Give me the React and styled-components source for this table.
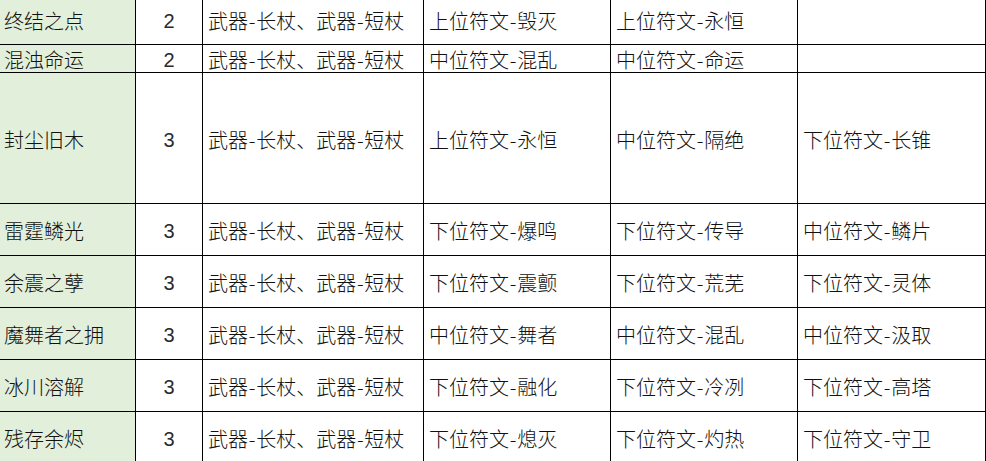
import React from "react";
import styled, { createGlobalStyle } from "styled-components";

const Global = createGlobalStyle`
  html, body {
    margin: 0;
    padding: 0;
    background: #ffffff;
    overflow: hidden;
  }
`;

const Page = styled.div`
  width: 986px;
  height: 461px;
  overflow: hidden;
  background: #ffffff;
`;

const Sheet = styled.table`
  border-collapse: collapse;
  table-layout: fixed;
  width: 986px;
  margin: -7px 0 0 -1px;
  font-family: "Noto Sans CJK SC", "Liberation Sans", sans-serif;
  font-size: 20px;
  font-weight: 300;
  color: #111111;
`;

const Row = styled.tr`
  height: ${(p) => p.$h}px;
`;

const Cell = styled.td`
  border: 1px solid #000000;
  padding: 3px 0 0 5px;
  vertical-align: middle;
  white-space: nowrap;
  overflow: hidden;
  line-height: 1;
`;

const NameCell = styled(Cell)`
  background: #e2efda;
  padding-left: 4px;
`;

const CountCell = styled(Cell)`
  text-align: center;
  padding-left: 0;
  font-family: "Liberation Sans", sans-serif;
  font-weight: 400;
  color: #2a2a2a;
`;

const Dash = styled.span`
  padding: 0 0.75px;
`;

const widths = [136, 67, 221, 187, 187, 188];

const rows = [
  { h: 51, name: "终结之点", n: 2, a: "上位符文-毁灭", b: "上位符文-永恒", c: "" },
  { h: 28, name: "混浊命运", n: 2, a: "中位符文-混乱", b: "中位符文-命运", c: "" },
  { h: 131, name: "封尘旧木", n: 3, a: "上位符文-永恒", b: "中位符文-隔绝", c: "下位符文-长锥" },
  { h: 52, name: "雷霆鳞光", n: 3, a: "下位符文-爆鸣", b: "下位符文-传导", c: "中位符文-鳞片" },
  { h: 52, name: "余震之孽", n: 3, a: "下位符文-震颤", b: "下位符文-荒芜", c: "下位符文-灵体" },
  { h: 52, name: "魔舞者之拥", n: 3, a: "中位符文-舞者", b: "中位符文-混乱", c: "中位符文-汲取" },
  { h: 52, name: "冰川溶解", n: 3, a: "下位符文-融化", b: "下位符文-冷冽", c: "下位符文-高塔" },
  { h: 52, name: "残存余烬", n: 3, a: "下位符文-熄灭", b: "下位符文-灼热", c: "下位符文-守卫" },
];

// split "xx-yy" so the dash gets a little air like the spreadsheet font
const Text = ({ value }) => {
  const parts = value.split("-");
  return parts.map((p, i) => (
    <React.Fragment key={i}>
      {i > 0 && <Dash>-</Dash>}
      {p}
    </React.Fragment>
  ));
};

export default function App() {
  return (
    <Page>
      <Global />
      <Sheet>
        <colgroup>
          {widths.map((w, i) => (
            <col key={i} style={{ width: w }} />
          ))}
        </colgroup>
        <tbody>
          {rows.map((r) => (
            <Row key={r.name} $h={r.h}>
              <NameCell>{r.name}</NameCell>
              <CountCell>{r.n}</CountCell>
              <Cell>
                <Text value="武器-长杖、武器-短杖" />
              </Cell>
              <Cell>
                <Text value={r.a} />
              </Cell>
              <Cell>
                <Text value={r.b} />
              </Cell>
              <Cell>
                <Text value={r.c} />
              </Cell>
            </Row>
          ))}
        </tbody>
      </Sheet>
    </Page>
  );
}
